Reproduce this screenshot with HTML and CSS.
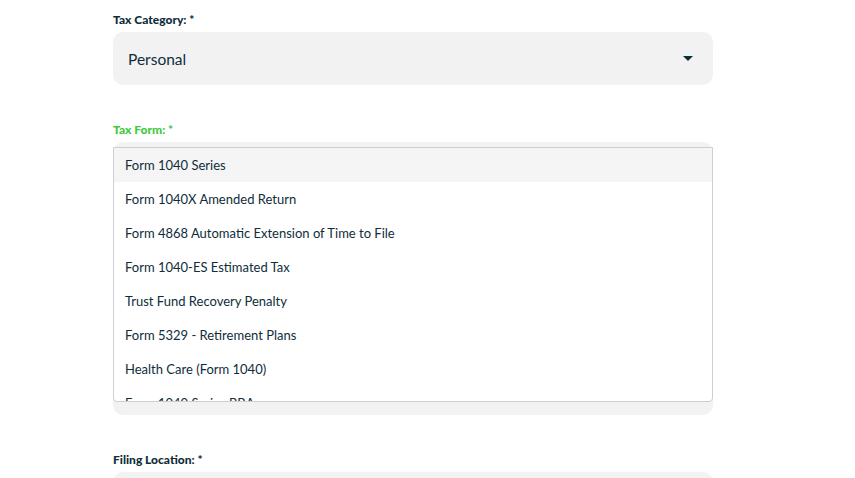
FILE: index.html
```html
<!DOCTYPE html>
<html lang="en">
<head>
  <meta charset="UTF-8" />
  <meta name="viewport" content="width=device-width, initial-scale=1.0"/>
  <title>Tax Filing</title>
  <link rel="stylesheet" href="styles.css">
</head>
<body>
  <div class="container">
    <div class="form-group">
      <label class="field-label">Tax Category: *</label>
      <div class="select-box">
        <span class="select-value">Personal</span>
        <span class="caret"></span>
      </div>
    </div>

    <div class="form-group">
      <label class="field-label active">Tax Form: *</label>
      <div class="select-box tall">
        <ul class="options">
          <li class="option highlighted">Form 1040 Series</li>
          <li class="option">Form 1040X Amended Return</li>
          <li class="option">Form 4868 Automatic Extension of Time to File</li>
          <li class="option">Form 1040-ES Estimated Tax</li>
          <li class="option">Trust Fund Recovery Penalty</li>
          <li class="option">Form 5329 - Retirement Plans</li>
          <li class="option">Health Care (Form 1040)</li>
          <li class="option">Form 1040 Series BBA</li>
        </ul>
      </div>
    </div>

    <div class="form-group">
      <label class="field-label">Filing Location: *</label>
      <div class="select-box"></div>
    </div>
  </div>
</body>
</html>
```

FILE: styles.css
```css
:root {
  --text-color: #0f2d3a;
  --green: #3fc93f;
  --field-bg: #f2f2f2;
  --border-color: #cfcfcf;
}

body {
  margin: 0;
  font-family: 'Lato', 'Open Sans', sans-serif;
  color: var(--text-color);
  background: white;
  overflow: hidden;
}

.container {
  width: 600px;
  padding: 14px 0 0 113px;
}

.form-group {
  margin-bottom: 39px;
}

.field-label {
  display: block;
  font-size: 12px;
  font-weight: 900;
  line-height: 12px;
  margin-bottom: 6px;
}

.field-label.active {
  color: var(--green);
}

.select-box {
  position: relative;
  height: 53px;
  background-color: var(--field-bg);
  border-radius: 10px;
  display: flex;
  align-items: center;
  padding: 0 20px 0 15px;
}

.select-box.tall {
  height: 273px;
  margin-bottom: 5px;
}

.select-value {
  flex: 1;
  font-size: 15.5px;
}

.caret {
  width: 0;
  height: 0;
  border-left: 5px solid transparent;
  border-right: 5px solid transparent;
  border-top: 5px solid var(--text-color);
}

.options {
  position: absolute;
  top: 5px;
  left: 0;
  right: 0;
  height: 253px;
  margin: 0;
  padding: 0;
  list-style: none;
  background: white;
  border: 1px solid var(--border-color);
  border-radius: 0 0 4px 4px;
  overflow: hidden;
}

.option {
  height: 34px;
  line-height: 34px;
  padding: 0 11px;
  font-size: 13px;
  white-space: nowrap;
}

.option.highlighted {
  background-color: #f5f5f5;
}
```
